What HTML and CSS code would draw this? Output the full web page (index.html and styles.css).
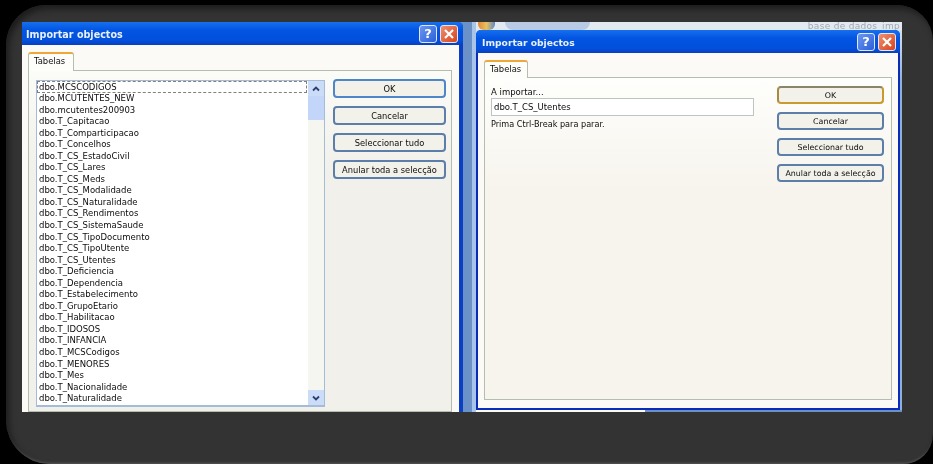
FILE: index.html
```html
<!DOCTYPE html>
<html lang="en">
<head>
    <meta charset="UTF-8">
    <meta name="viewport" content="width=device-width, initial-scale=1.0">
    <title>Importar objectos</title>
    <link rel="stylesheet" href="styles.css">
</head>
<body>
    <div class="frame">
        <div class="shot">
            <!-- first dialog: table list -->
            <div class="dialog dialog-left">
                <div class="titlebar">
                    <span class="title">Importar objectos</span>
                    <span class="btn-help">?</span>
                    <span class="btn-close"><svg viewBox="0 0 12 12" width="12" height="12"><path d="M2 2 L10 10 M10 2 L2 10" stroke="#fff" stroke-width="2.2" fill="none"/></svg></span>
                </div>
                <div class="dialog-body">
                    <div class="tab"><span>Tabelas</span></div>
                    <div class="tab-panel panel-left">
                        <div class="listbox">
                            <div class="list-items">
                                <div class="item item-focus">dbo.MCSCODIGOS</div>
                                <div class="item">dbo.MCUTENTES_NEW</div>
                                <div class="item">dbo.mcutentes200903</div>
                                <div class="item">dbo.T_Capitacao</div>
                                <div class="item">dbo.T_Comparticipacao</div>
                                <div class="item">dbo.T_Concelhos</div>
                                <div class="item">dbo.T_CS_EstadoCivil</div>
                                <div class="item">dbo.T_CS_Lares</div>
                                <div class="item">dbo.T_CS_Meds</div>
                                <div class="item">dbo.T_CS_Modalidade</div>
                                <div class="item">dbo.T_CS_Naturalidade</div>
                                <div class="item">dbo.T_CS_Rendimentos</div>
                                <div class="item">dbo.T_CS_SistemaSaude</div>
                                <div class="item">dbo.T_CS_TipoDocumento</div>
                                <div class="item">dbo.T_CS_TipoUtente</div>
                                <div class="item">dbo.T_CS_Utentes</div>
                                <div class="item">dbo.T_Deficiencia</div>
                                <div class="item">dbo.T_Dependencia</div>
                                <div class="item">dbo.T_Estabelecimento</div>
                                <div class="item">dbo.T_GrupoEtario</div>
                                <div class="item">dbo.T_Habilitacao</div>
                                <div class="item">dbo.T_IDOSOS</div>
                                <div class="item">dbo.T_INFANCIA</div>
                                <div class="item">dbo.T_MCSCodigos</div>
                                <div class="item">dbo.T_MENORES</div>
                                <div class="item">dbo.T_Mes</div>
                                <div class="item">dbo.T_Nacionalidade</div>
                                <div class="item">dbo.T_Naturalidade</div>
                            </div>
                            <div class="scrollbar">
                                <span class="arrow"><svg viewBox="0 0 10 10" width="10" height="10"><path d="M2 6.5 L5 3.5 L8 6.5" stroke="#2c3f6e" stroke-width="1.8" fill="none"/></svg></span>
                                <span class="thumb"></span>
                                <span class="track"></span>
                                <span class="arrow"><svg viewBox="0 0 10 10" width="10" height="10"><path d="M2 3.5 L5 6.5 L8 3.5" stroke="#2c3f6e" stroke-width="1.8" fill="none"/></svg></span>
                            </div>
                        </div>
                        <div class="buttons">
                            <button class="btn btn-blue">OK</button>
                            <button class="btn">Cancelar</button>
                            <button class="btn">Seleccionar tudo</button>
                            <button class="btn">Anular toda a selecção</button>
                        </div>
                    </div>
                </div>
            </div>

            <div class="gutter"></div>

            <!-- second dialog, over the Access window -->
            <div class="right-side">
                <div class="app-strip">
                    <span class="office-btn"></span>
                    <span class="quick-bar"></span>
                    <span class="app-title">base de dados_imp</span>
                </div>
                <div class="dialog dialog-right">
                    <div class="titlebar">
                        <span class="title">Importar objectos</span>
                        <span class="btn-help">?</span>
                        <span class="btn-close"><svg viewBox="0 0 12 12" width="12" height="12"><path d="M2 2 L10 10 M10 2 L2 10" stroke="#fff" stroke-width="2.2" fill="none"/></svg></span>
                    </div>
                    <div class="dialog-body">
                        <div class="tab"><span>Tabelas</span></div>
                        <div class="tab-panel panel-right">
                            <div class="progress">
                                <div class="progress-label">A importar...</div>
                                <div class="textbox">dbo.T_CS_Utentes</div>
                                <div class="progress-hint">Prima Ctrl-Break para parar.</div>
                            </div>
                            <div class="buttons">
                                <button class="btn btn-default">OK</button>
                                <button class="btn">Cancelar</button>
                                <button class="btn">Seleccionar tudo</button>
                                <button class="btn">Anular toda a selecção</button>
                            </div>
                        </div>
                    </div>
                </div>
                <div class="under-strip"></div>
            </div>
        </div>
    </div>
</body>
</html>
```

FILE: styles.css
```css
html, body {
    margin: 0;
    padding: 0;
    height: 100%;
    background-color: #000;
    overflow: hidden;
}
body {
    font-family: "DejaVu Sans", "Noto Sans", sans-serif;
    padding: 5px 0 0 6px;
    box-sizing: border-box;
}
.frame {
    width: 927px;
    height: 459px;
    box-sizing: border-box;
    padding: 17px 31px 0 16px;
    background-color: #333;
    border-radius: 40px 36px 30px 44px;
    box-shadow: inset 0 -4px 3px -3px #5a5a5a, inset 3px 4px 6px #1c1c1c;
}
/* the source picture is a soft, scaled-up capture */
.shot {
    display: flex;
    height: 390px;
    width: 880px;
    overflow: hidden;
    background-color: #6a92c8;
    filter: blur(0.6px);
}

/* dialog chrome */
.dialog {
    display: flex;
    flex-direction: column;
    flex: none;
    box-sizing: border-box;
    border-radius: 5px 5px 0 0;
    overflow: hidden;
}
.dialog-left {
    width: 441px;
    height: 390px;
    border-radius: 0 5px 0 0;
    background-color: #0b3fc4;
}
.dialog-right {
    width: 424px;
    height: 380px;
    background-color: #0a2cb8;
}
.titlebar {
    display: flex;
    align-items: center;
    flex: none;
    height: 23px;
    padding: 0 5px 0 4px;
    gap: 3px;
    background: linear-gradient(#1670ee, #0355e2 35%, #0250dc 80%, #0a3fc0);
}
.dialog-right .titlebar {
    padding: 0 4px 0 6px;
}
.title {
    flex: 1;
    padding-top: 2px;
    color: #e8f0fa;
    font-size: 9.6px;
    font-weight: bold;
}
.dialog-right .title {
    font-size: 9.2px;
}
.btn-help, .btn-close {
    display: flex;
    align-items: center;
    justify-content: center;
    box-sizing: border-box;
    width: 18px;
    height: 18px;
    border: 1px solid #dfe8f8;
    border-radius: 3px;
}
.btn-help {
    background: linear-gradient(135deg, #6d97ee, #2a5fd8);
    color: #fff;
    font-size: 13px;
    font-weight: bold;
}
.btn-close {
    background: linear-gradient(135deg, #ee9070, #d8431c);
}
.dialog-body {
    flex: 1;
    display: flex;
    flex-direction: column;
    min-height: 0;
    background-color: #fbfaf6;
    padding: 7px 7px 0 6px;
    border-right: 4px solid #0b3fc4;
}
.dialog-right .dialog-body {
    padding: 7px 6px 8px 6px;
    border: 2px solid #0a2cb8;
    border-top: none;
}
.tab {
    align-self: flex-start;
    box-sizing: border-box;
    width: 46px;
    height: 19px;
    margin-bottom: -1px;
    padding: 2px 0 0 5px;
    background-color: #fdfdfa;
    border: 1px solid #b5bdae;
    border-bottom: none;
    border-top: 2px solid #eea83a;
    border-radius: 3px 3px 0 0;
    position: relative;
    z-index: 1;
    color: #111;
    font-size: 8.4px;
}
.dialog-right .tab {
    width: 44px;
    height: 18px;
}
.tab-panel {
    flex: 1;
    display: flex;
    min-height: 0;
    background: linear-gradient(#fefefc, #f7f4ed 35%);
    border: 1px solid #b5bdae;
}

/* list box */
.panel-left {
    padding: 8px 5px 0 7px;
    gap: 8px;
    background: linear-gradient(#fbfbf8, #f1f0ea 30%);
}
.listbox {
    display: flex;
    flex: none;
    width: 289px;
    height: 327px;
    margin-top: 1px;
    box-sizing: border-box;
    background-color: #fff;
    border: 1px solid #a5bcd8;
    border-bottom-width: 2px;
}
.list-items {
    flex: 1;
    padding: 0 1px 0 0;
    min-width: 0;
}
.item {
    height: 11.55px;
    line-height: 11.55px;
    padding-left: 2px;
    color: #0c0c0c;
    font-size: 8.5px;
    white-space: nowrap;
}
.item-focus {
    box-sizing: border-box;
    border: 1px dashed #808080;
    height: 12px;
    line-height: 10px;
    padding-left: 1px;
}
.scrollbar {
    display: flex;
    flex-direction: column;
    flex: none;
    width: 16px;
    background-color: #f6f6f0;
}
.arrow {
    display: flex;
    align-items: center;
    justify-content: center;
    flex: none;
    height: 15px;
    background-color: #cbdcf8;
}
.thumb {
    flex: none;
    height: 24px;
    background-color: #c3d6fa;
}
.track {
    flex: 1;
}

/* buttons */
.buttons {
    display: flex;
    flex-direction: column;
    flex: none;
    gap: 8px;
}
.btn {
    width: 113px;
    height: 19px;
    padding: 0;
    border: 2px solid #5c7ea8;
    border-radius: 4px;
    background-color: #f2f1ea;
    color: #0c0c0c;
    font-family: inherit;
    font-size: 8.3px;
    white-space: nowrap;
}
.btn-blue {
    border-color: #4f86c8;
}
.btn-default {
    border-color: #8a8468 #c89a30 #c89a30 #a88a40;
}

/* right hand side */
.gutter {
    flex: none;
    width: 13px;
    background: linear-gradient(90deg, #6a92c8 0 9px, #a8c4e8 9px 100%);
}
.right-side {
    flex: 1;
    display: flex;
    flex-direction: column;
    min-width: 0;
    background: linear-gradient(#dfe7f0, #8fb0d8 60px);
}
.app-strip {
    display: flex;
    align-items: flex-start;
    flex: none;
    height: 8px;
    background-color: #e3e9f0;
}
.office-btn {
    width: 17px;
    height: 8px;
    margin-left: 2px;
    background: linear-gradient(90deg, #e08a38, #e8c060 50%, #5a88c8);
    border-radius: 0 0 6px 6px;
}
.quick-bar {
    width: 85px;
    height: 8px;
    margin-left: 10px;
    background-color: #b9cbe4;
    border-radius: 0 0 8px 8px;
}
.app-title {
    margin-left: auto;
    margin-right: 2px;
    color: #a2a8b2;
    font-size: 9px;
    line-height: 8px;
    letter-spacing: 0.3px;
    white-space: nowrap;
}
.under-strip {
    flex: none;
    height: 2px;
    background: linear-gradient(90deg, #fbfaf6 0 169px, #6a92c8 169px 100%);
}
.panel-right {
    padding: 8px 7px 0 6px;
    justify-content: space-between;
}
.progress {
    width: 263px;
    color: #0c0c0c;
    font-size: 8.5px;
}
.progress-label {
    height: 12px;
    line-height: 12px;
}
.textbox {
    box-sizing: border-box;
    height: 18px;
    line-height: 16px;
    padding-left: 2px;
    background-color: #fff;
    border: 1px solid #bcc4c4;
}
.progress-hint {
    margin-top: 2px;
    line-height: 12px;
    font-size: 8.15px;
}
.panel-right .btn {
    width: 107px;
    height: 18px;
    font-size: 7.9px;
}
```
